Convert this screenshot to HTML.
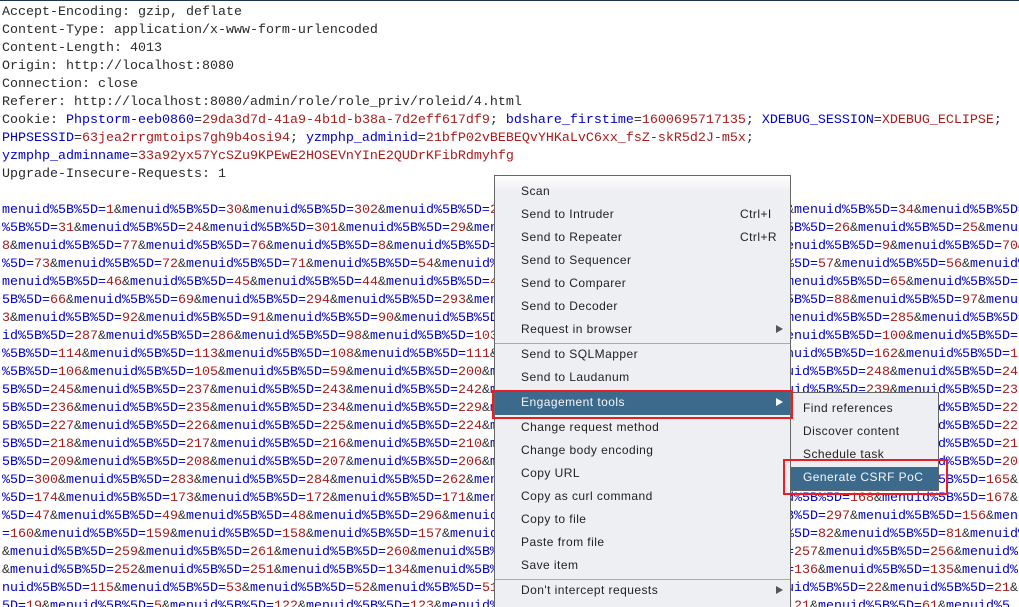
<!DOCTYPE html>
<html><head><meta charset="utf-8"><style>
html,body{margin:0;padding:0;background:#fff;overflow:hidden}
html{height:607px}
body{position:relative;width:1019px;height:607px;overflow:hidden}
#top{position:absolute;left:0;top:0;width:1019px;height:1px;background:#1d3349}
.t{position:absolute;left:2px;font:13.333px/18px "Liberation Mono",monospace;white-space:normal;color:#2a2a2a}
.t div{height:18px;white-space:pre}
.p{color:#0000c8}
.p b,.c b{font-weight:normal;color:#a81c1c}
.p i{font-style:normal;color:#333}
.c u{text-decoration:none;color:#0000c8}
#m,#s{position:absolute;box-sizing:border-box;border:1px solid #666;background:#eeeff3;font:12px/23px "Liberation Sans",sans-serif;color:#222;letter-spacing:.45px}
#m{left:494px;top:175px;width:297px;height:440px;background:linear-gradient(#fff 0,#eeeff3 16px)}
#s{left:790px;top:392px;width:149px;height:99px}
.a{position:absolute;white-space:pre;height:23px}
.h{position:absolute;background:#3c6a8c}
.sep{position:absolute;left:0;right:0;height:1px;background:#aaa}
.tri{position:absolute;left:281px;width:0;height:0;border-left:7px solid #555;border-top:4.5px solid transparent;border-bottom:4.5px solid transparent}
.box{position:absolute;box-sizing:border-box;border:2px solid #ed1c24}
</style></head><body>
<div id="top"></div>
<div class="t c" style="top:4px">
<div>Accept-Encoding: gzip, deflate</div>
<div>Content-Type: application/x-www-form-urlencoded</div>
<div>Content-Length: 4013</div>
<div>Origin: http://localhost:8080</div>
<div>Connection: close</div>
<div>Referer: http://localhost:8080/admin/role/role_priv/roleid/4.html</div>
<div>Cookie: <u>Phpstorm-eeb0860</u>=<b>29da3d7d-41a9-4b1d-b38a-7d2eff617df9</b>; <u>bdshare_firstime</u>=<b>1600695717135</b>; <u>XDEBUG_SESSION</u>=<b>XDEBUG_ECLIPSE</b>;</div>
<div><u>PHPSESSID</u>=<b>63jea2rrgmtoips7gh9b4osi94</b>; <u>yzmphp_adminid</u>=<b>21bfP02vBEBEQvYHKaLvC6xx_fsZ-skR5d2J-m5x</b>;</div>
<div><u>yzmphp_adminname</u>=<b>33a92yx57YcSZu9KPEwE2HOSEVnYInE2QUDrKFibRdmyhfg</b></div>
<div>Upgrade-Insecure-Requests: 1</div>
</div>
<div class="t p" style="top:202px">
<div>menuid%5B%5D=<b>1</b><i>&amp;</i>menuid%5B%5D=<b>30</b><i>&amp;</i>menuid%5B%5D=<b>302</b><i>&amp;</i>menuid%5B%5D=<b>2</b></div>
<div>%5B%5D=<b>31</b><i>&amp;</i>menuid%5B%5D=<b>24</b><i>&amp;</i>menuid%5B%5D=<b>301</b><i>&amp;</i>menuid%5B%5D=<b>29</b><i>&amp;</i>menuid</div>
<div><b>8</b><i>&amp;</i>menuid%5B%5D=<b>77</b><i>&amp;</i>menuid%5B%5D=<b>76</b><i>&amp;</i>menuid%5B%5D=<b>8</b><i>&amp;</i>menuid%5B%5D=</div>
<div>%5D=<b>73</b><i>&amp;</i>menuid%5B%5D=<b>72</b><i>&amp;</i>menuid%5B%5D=<b>71</b><i>&amp;</i>menuid%5B%5D=<b>54</b><i>&amp;</i>menuid%</div>
<div>menuid%5B%5D=<b>46</b><i>&amp;</i>menuid%5B%5D=<b>45</b><i>&amp;</i>menuid%5B%5D=<b>44</b><i>&amp;</i>menuid%5B%5D=<b>4</b></div>
<div>5B%5D=<b>66</b><i>&amp;</i>menuid%5B%5D=<b>69</b><i>&amp;</i>menuid%5B%5D=<b>294</b><i>&amp;</i>menuid%5B%5D=<b>293</b><i>&amp;</i>menuid</div>
<div><b>3</b><i>&amp;</i>menuid%5B%5D=<b>92</b><i>&amp;</i>menuid%5B%5D=<b>91</b><i>&amp;</i>menuid%5B%5D=<b>90</b><i>&amp;</i>menuid%5B%5D</div>
<div>id%5B%5D=<b>287</b><i>&amp;</i>menuid%5B%5D=<b>286</b><i>&amp;</i>menuid%5B%5D=<b>98</b><i>&amp;</i>menuid%5B%5D=<b>103</b></div>
<div>%5B%5D=<b>114</b><i>&amp;</i>menuid%5B%5D=<b>113</b><i>&amp;</i>menuid%5B%5D=<b>108</b><i>&amp;</i>menuid%5B%5D=<b>111</b><i>&amp;</i></div>
<div>%5B%5D=<b>106</b><i>&amp;</i>menuid%5B%5D=<b>105</b><i>&amp;</i>menuid%5B%5D=<b>59</b><i>&amp;</i>menuid%5B%5D=<b>200</b><i>&amp;</i>m</div>
<div>5B%5D=<b>245</b><i>&amp;</i>menuid%5B%5D=<b>237</b><i>&amp;</i>menuid%5B%5D=<b>243</b><i>&amp;</i>menuid%5B%5D=<b>242</b><i>&amp;</i>m</div>
<div>5B%5D=<b>236</b><i>&amp;</i>menuid%5B%5D=<b>235</b><i>&amp;</i>menuid%5B%5D=<b>234</b><i>&amp;</i>menuid%5B%5D=<b>229</b><i>&amp;</i>m</div>
<div>5B%5D=<b>227</b><i>&amp;</i>menuid%5B%5D=<b>226</b><i>&amp;</i>menuid%5B%5D=<b>225</b><i>&amp;</i>menuid%5B%5D=<b>224</b><i>&amp;</i>m</div>
<div>5B%5D=<b>218</b><i>&amp;</i>menuid%5B%5D=<b>217</b><i>&amp;</i>menuid%5B%5D=<b>216</b><i>&amp;</i>menuid%5B%5D=<b>210</b><i>&amp;</i>m</div>
<div>5B%5D=<b>209</b><i>&amp;</i>menuid%5B%5D=<b>208</b><i>&amp;</i>menuid%5B%5D=<b>207</b><i>&amp;</i>menuid%5B%5D=<b>206</b><i>&amp;</i>m</div>
<div>%5D=<b>300</b><i>&amp;</i>menuid%5B%5D=<b>283</b><i>&amp;</i>menuid%5B%5D=<b>284</b><i>&amp;</i>menuid%5B%5D=<b>262</b><i>&amp;</i>menuid</div>
<div>%5D=<b>174</b><i>&amp;</i>menuid%5B%5D=<b>173</b><i>&amp;</i>menuid%5B%5D=<b>172</b><i>&amp;</i>menuid%5B%5D=<b>171</b><i>&amp;</i>menuid</div>
<div>%5D=<b>47</b><i>&amp;</i>menuid%5B%5D=<b>49</b><i>&amp;</i>menuid%5B%5D=<b>48</b><i>&amp;</i>menuid%5B%5D=<b>296</b><i>&amp;</i>menuid%</div>
<div>=<b>160</b><i>&amp;</i>menuid%5B%5D=<b>159</b><i>&amp;</i>menuid%5B%5D=<b>158</b><i>&amp;</i>menuid%5B%5D=<b>157</b><i>&amp;</i>menuid%</div>
<div><i>&amp;</i>menuid%5B%5D=<b>259</b><i>&amp;</i>menuid%5B%5D=<b>261</b><i>&amp;</i>menuid%5B%5D=<b>260</b><i>&amp;</i>menuid%5B%</div>
<div><i>&amp;</i>menuid%5B%5D=<b>252</b><i>&amp;</i>menuid%5B%5D=<b>251</b><i>&amp;</i>menuid%5B%5D=<b>134</b><i>&amp;</i>menuid%5B%</div>
<div>nuid%5B%5D=<b>115</b><i>&amp;</i>menuid%5B%5D=<b>53</b><i>&amp;</i>menuid%5B%5D=<b>52</b><i>&amp;</i>menuid%5B%5D=<b>51</b></div>
<div>5D=<b>19</b><i>&amp;</i>menuid%5B%5D=<b>5</b><i>&amp;</i>menuid%5B%5D=<b>122</b><i>&amp;</i>menuid%5B%5D=<b>123</b><i>&amp;</i>menuid%</div>
</div>
<div class="t p" style="top:202px">
<div style="margin-left:784px"><i>&amp;</i>menuid%5B%5D=<b>34</b><i>&amp;</i>menuid%5B%5D=</div>
<div style="margin-left:784px">5B%5D=<b>26</b><i>&amp;</i>menuid%5B%5D=<b>25</b><i>&amp;</i>menuid</div>
<div style="margin-left:776px">menuid%5B%5D=<b>9</b><i>&amp;</i>menuid%5B%5D=<b>70</b><i>&amp;</i></div>
<div style="margin-left:784px">%5D=<b>57</b><i>&amp;</i>menuid%5B%5D=<b>56</b><i>&amp;</i>menuid%</div>
<div style="margin-left:784px">menuid%5B%5D=<b>65</b><i>&amp;</i>menuid%5B%5D=</div>
<div style="margin-left:784px">5B%5D=<b>88</b><i>&amp;</i>menuid%5B%5D=<b>97</b><i>&amp;</i>menuid</div>
<div style="margin-left:784px">menuid%5B%5D=<b>285</b><i>&amp;</i>menuid%5B%5D=</div>
<div style="margin-left:776px">menuid%5B%5D=<b>100</b><i>&amp;</i>menuid%5B%5D=</div>
<div style="margin-left:768px">menuid%5B%5D=<b>162</b><i>&amp;</i>menuid%5B%5D=<b>1</b></div>
<div style="margin-left:760px">menuid%5B%5D=<b>248</b><i>&amp;</i>menuid%5B%5D=<b>24</b></div>
<div style="margin-left:760px">menuid%5B%5D=<b>239</b><i>&amp;</i>menuid%5B%5D=<b>23</b></div>
<div style="margin-left:896px">menuid%5B%5D=<b>22</b></div>
<div style="margin-left:896px">menuid%5B%5D=<b>22</b></div>
<div style="margin-left:896px">menuid%5B%5D=<b>21</b></div>
<div style="margin-left:896px">menuid%5B%5D=<b>20</b></div>
<div style="margin-left:936px">5B%5D=<b>165</b><i>&amp;</i></div>
<div style="margin-left:784px">d%5B%5D=<b>168</b><i>&amp;</i>menuid%5B%5D=<b>167</b><i>&amp;</i></div>
<div style="margin-left:768px">%5B%5D=<b>297</b><i>&amp;</i>menuid%5B%5D=<b>156</b><i>&amp;</i>menuid</div>
<div style="margin-left:784px">%5D=<b>82</b><i>&amp;</i>menuid%5B%5D=<b>81</b><i>&amp;</i>menuid%</div>
<div style="margin-left:784px">=<b>257</b><i>&amp;</i>menuid%5B%5D=<b>256</b><i>&amp;</i>menuid%</div>
<div style="margin-left:784px">=<b>136</b><i>&amp;</i>menuid%5B%5D=<b>135</b><i>&amp;</i>menuid%</div>
<div style="margin-left:760px">menuid%5B%5D=<b>22</b><i>&amp;</i>menuid%5B%5D=<b>21</b><i>&amp;</i></div>
<div style="margin-left:784px"><b>121</b><i>&amp;</i>menuid%5B%5D=<b>61</b><i>&amp;</i>menuid%5</div>
</div>

<div id="m">
<div class="a" style="left:26px;top:4px">Scan</div>
<div class="a" style="left:26px;top:27px">Send to Intruder</div>
<div class="a" style="left:245px;top:27px">Ctrl+I</div>
<div class="a" style="left:26px;top:50px">Send to Repeater</div>
<div class="a" style="left:245px;top:50px">Ctrl+R</div>
<div class="a" style="left:26px;top:73px">Send to Sequencer</div>
<div class="a" style="left:26px;top:96px">Send to Comparer</div>
<div class="a" style="left:26px;top:119px">Send to Decoder</div>
<div class="a" style="left:26px;top:142px">Request in browser</div>
<div class="tri" style="top:149px"></div>
<div class="sep" style="top:167px"></div>
<div class="a" style="left:26px;top:167px">Send to SQLMapper</div>
<div class="a" style="left:26px;top:190px">Send to Laudanum</div>
<div class="h" style="left:0;right:0;top:215px;height:24px"></div>
<div class="a" style="left:26px;top:215px;color:#f4f6f8">Engagement tools</div>
<div class="tri" style="top:222px;border-left-color:#fff"></div>
<div class="sep" style="top:241px"></div>
<div class="a" style="left:26px;top:240px">Change request method</div>
<div class="a" style="left:26px;top:263px">Change body encoding</div>
<div class="a" style="left:26px;top:286px">Copy URL</div>
<div class="a" style="left:26px;top:309px">Copy as curl command</div>
<div class="a" style="left:26px;top:332px">Copy to file</div>
<div class="a" style="left:26px;top:355px">Paste from file</div>
<div class="a" style="left:26px;top:378px">Save item</div>
<div class="sep" style="top:403px"></div>
<div class="a" style="left:26px;top:403px">Don't intercept requests</div>
<div class="tri" style="top:410px"></div>
</div>

<div id="s">
<div class="a" style="left:12px;top:4px">Find references</div>
<div class="a" style="left:12px;top:27px">Discover content</div>
<div class="a" style="left:12px;top:50px">Schedule task</div>
<div class="h" style="left:0;right:0;top:74px;height:23px"></div>
<div class="a" style="left:12px;top:73px;color:#f4f6f8">Generate CSRF PoC</div>
</div>

<div class="box" style="left:492px;top:390px;width:301px;height:29px"></div>
<div class="box" style="left:783px;top:459px;width:165px;height:36px"></div>
</body></html>
